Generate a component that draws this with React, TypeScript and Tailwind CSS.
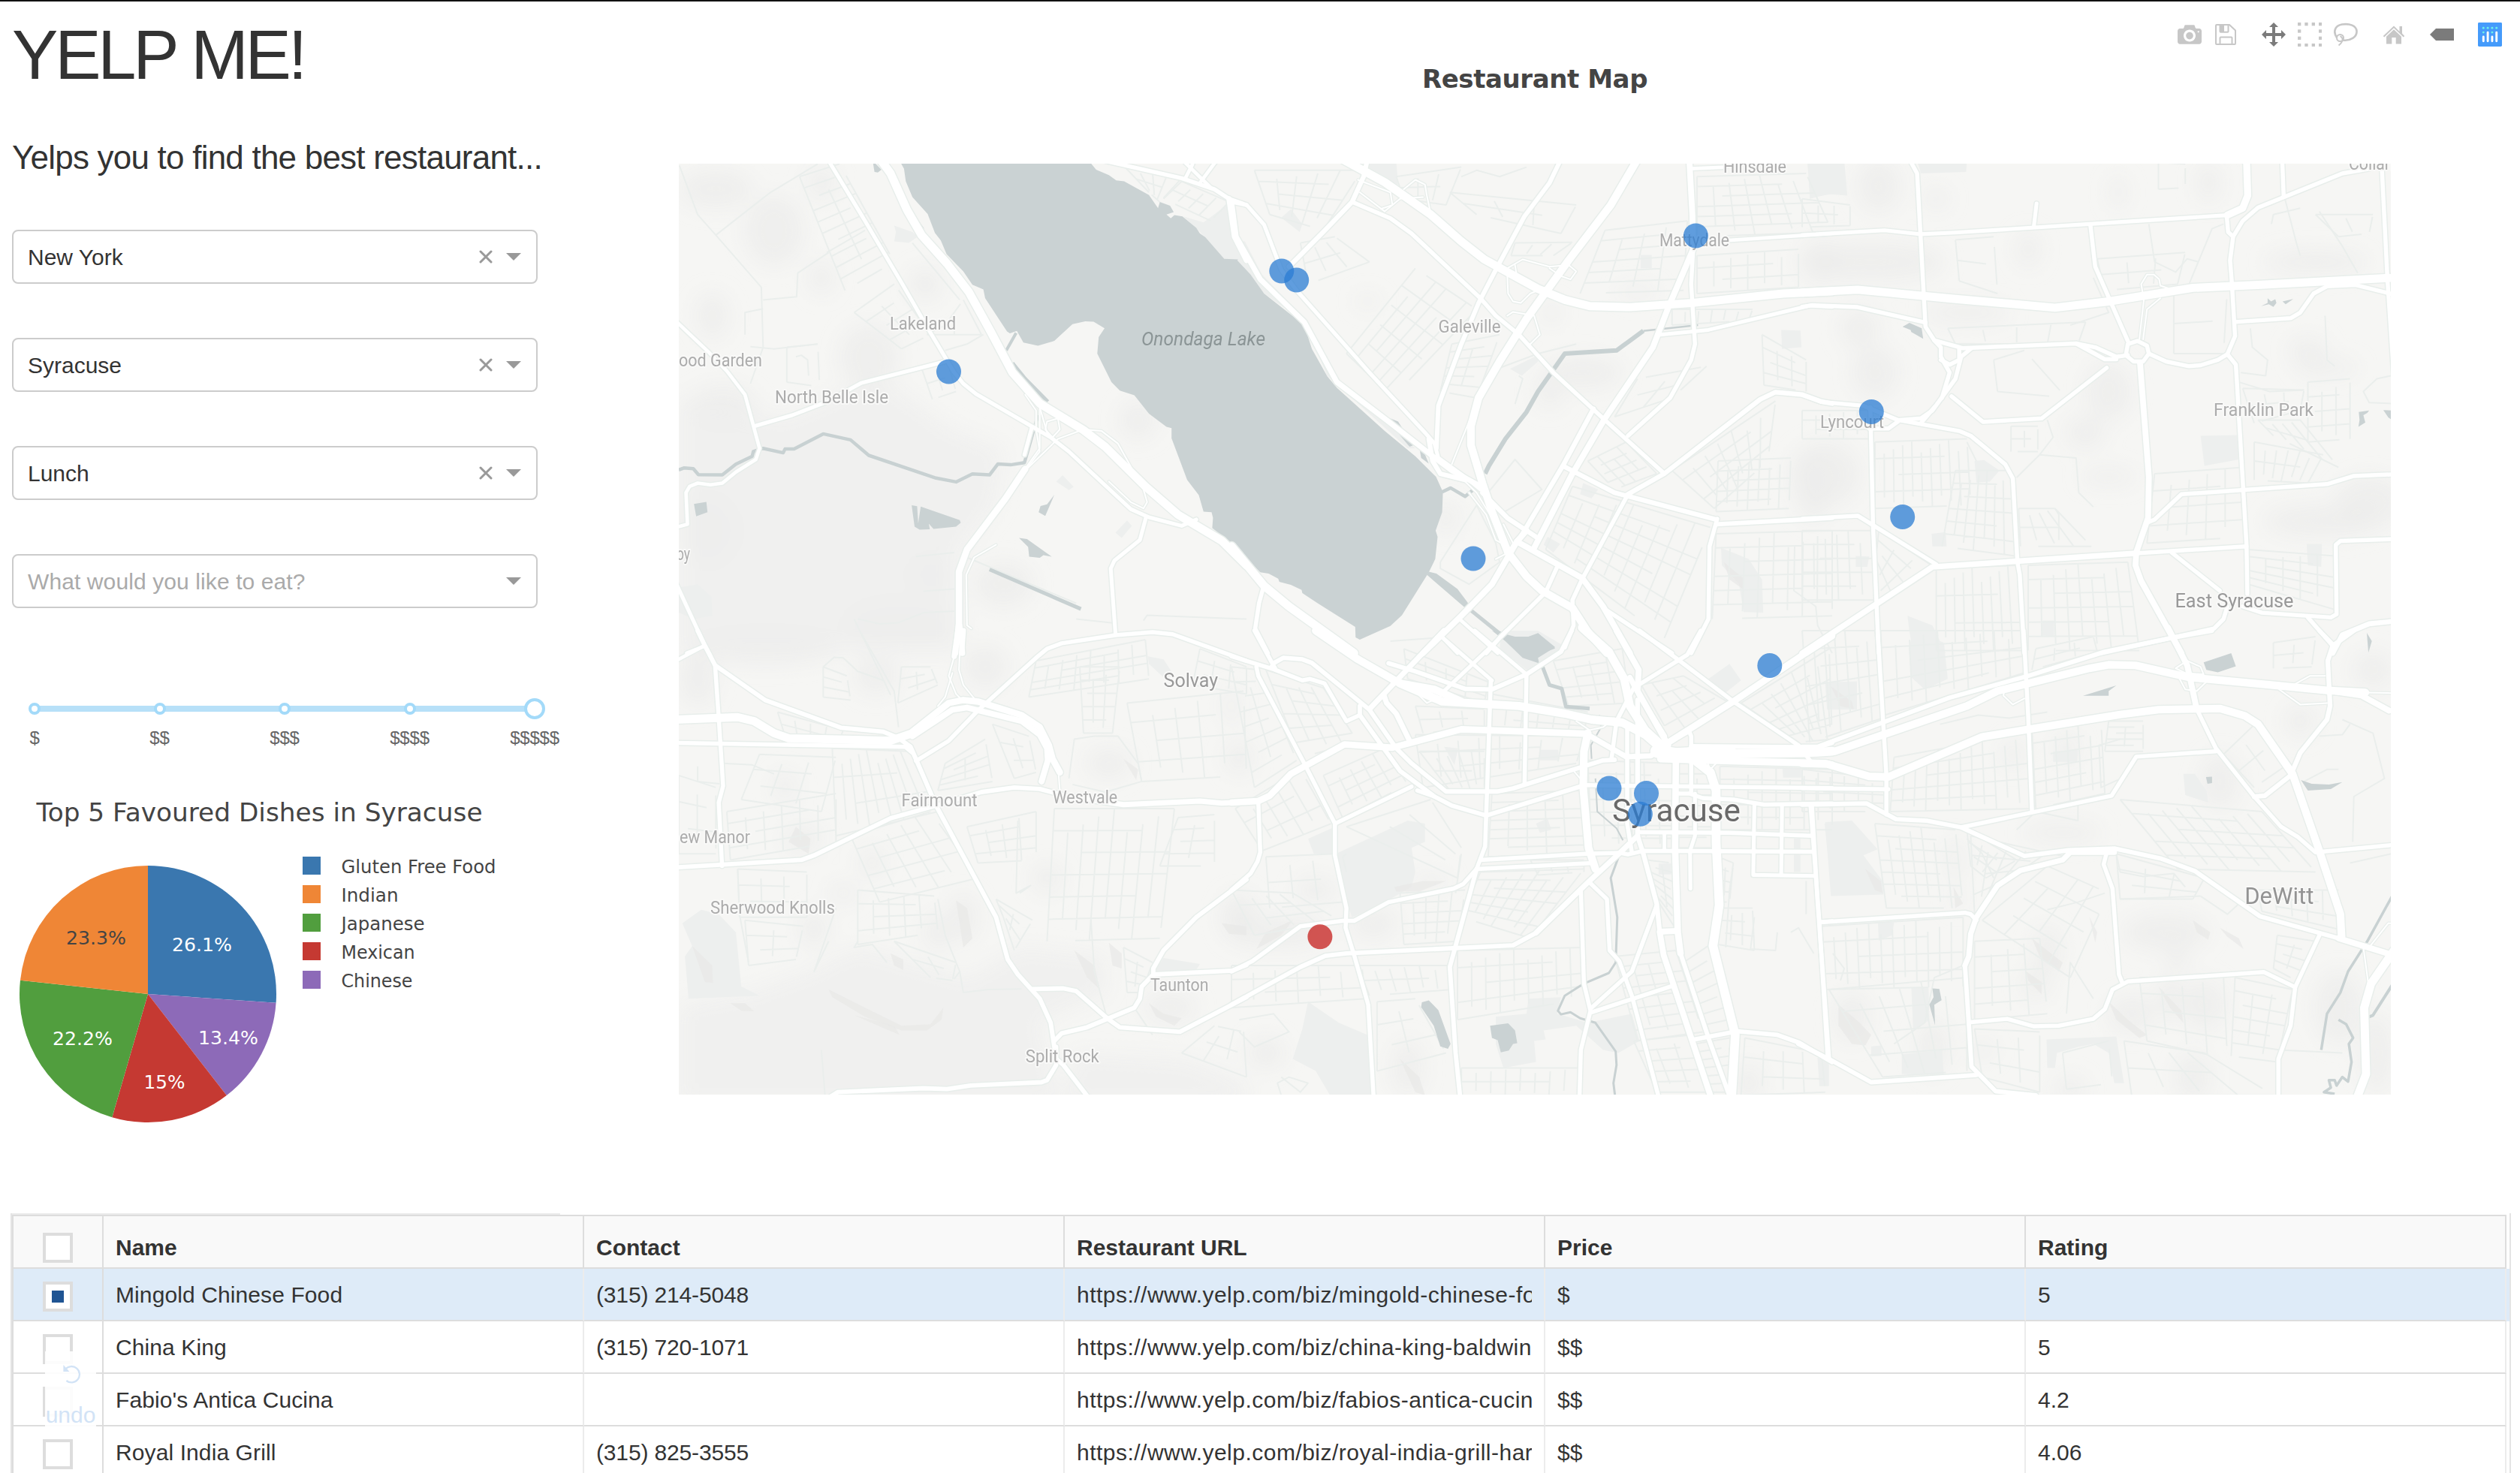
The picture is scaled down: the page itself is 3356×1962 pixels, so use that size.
import React from "react";

/* ------------------------------------------------------------------ */
/* Map geometry                                                        */
/* ------------------------------------------------------------------ */

type Tile = "A" | "B" | "C" | "D" | "E" | "F";

// Each survey tile has its own origin and resolution on the page.
const TILES: Record<Tile, [number, number, number, number]> = {
  A: [900, 210, 760 / 1568, 660 / 1568],
  B: [1640, 210, 800 / 1568, 660 / 1568],
  C: [2400, 210, 800 / 1568, 660 / 1568],
  D: [900, 840, 760 / 1568, 630 / 1568],
  E: [1640, 840, 800 / 1568, 630 / 1568],
  F: [2400, 840, 800 / 1568, 630 / 1568],
};

const pt = (t: Tile, x: number, y: number): [number, number] => {
  const [ox, oy, sx, sy] = TILES[t];
  return [Math.round((ox + x * sx) * 10) / 10, Math.round((oy + y * sy) * 10) / 10];
};

const line = (t: Tile, s: string) =>
  s
    .trim()
    .split(/\s+/)
    .map((p) => {
      const [x, y] = p.split(",").map(Number);
      return pt(t, x, y).join(",");
    })
    .join(" ");

const LAKE = [
  line("A", "615,10 627,35 632,75 650,125 692,178 712,238 728,262 744,305 790,360 815,402 845,417 850,445 910,550 918,556 937,548 955,585 995,595 1040,580 1090,527 1125,518 1148,519 1178,540 1162,568 1158,620 1197,710 1220,737 1260,752 1300,810 1348,852 1362,856 1362,888 1405,1020 1437,1068 1450,1120 1472,1122 1476,1140 1474,1172 1510,1205"),
  line("B", "0,1222 75,1312 97,1316 122,1332 125,1342 155,1352 183,1368 185,1378 225,1410 323,1485 324,1518 335,1525 415,1482 445,1448 515,1312 532,1270 538,1200 533,1180 550,1122 552,1058 534,1010 480,945 400,865 275,728 250,692 210,605 190,530 85,430 50,370 15,325"),
  line("A", "1545,322 1507,320 1455,252 1440,240 1430,222 1392,186 1370,182 1360,192 1348,180 1368,172 1358,152 1330,140 1325,160 1300,118 1232,75 1210,72 1190,55 1155,38 1135,10"),
].join(" ");

const WATER: [Tile, string][] = [
  ["A", "541,10 565,38 555,47 546,45"],
  ["A", "50,1096 84,1089 87,1122 56,1135"],
  ["A", "648,1100 663,1103 666,1157 673,1104 780,1147 783,1155 770,1168 708,1175 695,1158 698,1176 670,1177 656,1168"],
  ["A", "1040,1067 1015,1134 997,1122 1002,1102 1020,1097"],
  ["A", "943,1203 965,1207 1033,1263 1010,1258 1000,1266 971,1263 968,1232"],
  ["A", "643,158 683,225 670,215"],
  ["B", "515,1310 535,1316 590,1365 615,1405 625,1425 700,1498 735,1520 775,1522 800,1505 845,1553 810,1568 755,1568 620,1435 510,1320"],
  ["B", "405,820 435,835 475,910 465,915 430,865"],
  ["B", "492,928 500,925 515,968 495,950"],
  ["E", "680,0 740,20 775,20 800,8 845,55 800,90 803,108 760,90 715,35"],
  ["E", "497,1232 515,1226 540,1258 572,1370 565,1386 545,1378 528,1310 495,1248"],
  ["E", "675,1310 722,1302 740,1325 746,1368 735,1370 724,1392 703,1398 695,1358 680,1350"],
  ["C", "262,535 280,523 312,540 316,573 285,552 283,545"],
  ["C", "1198,470 1215,460 1215,445 1224,455 1235,448 1238,460 1230,472 1218,464"],
  ["C", "1254,455 1282,447 1262,464"],
  ["C", "1453,805 1480,800 1475,808 1465,815 1470,838 1452,852 1455,830"],
  ["C", "1517,799 1540,800 1540,830 1530,822"],
  ["C", "1474,1504 1487,1530 1478,1566"],
  ["F", "1048,105 1120,75 1132,118 1085,138 1055,130"],
  ["F", "733,216 820,182 800,200 800,216"],
  ["F", "1302,495 1330,508 1375,510 1410,502 1380,525 1320,530"],
  ["F", "1054,485 1070,484 1070,505 1058,508"],
  ["F", "340,1186 358,1188 364,1225 345,1240 347,1308 332,1240 343,1215"],
];

const STREAMS: [Tile, number, string][] = [
  ["A", 4.5, "8,988 22,982 48,984 62,1003 128,1004 165,970 210,945 213,930 240,920 295,934 300,922 325,922 405,874 480,893 530,942 715,1014 770,1026 815,1001 862,1004 885,969 920,972 958,965 995,815"],
  ["A", 4, "908,610 935,555"],
  ["A", 5, "925,650 960,700 1022,772"],
  ["A", 5, "862,1303 1113,1428"],
  ["B", 6, "662,1000 672,975 715,890 770,805 800,740 870,620 1005,610 1075,548"],
  ["B", 2.5, "1075,548 1218,530"],
  ["B", 4.5, "550,1058 572,1045 610,1072 632,1050"],
  ["E", 5, "812,120 830,180 862,192 873,252 935,258"],
  ["E", 2, "960,280 965,320 938,380 940,425"],
  ["E", 2, "950,490 955,600 1005,655 1022,695"],
  ["E", 3, "1012,745 990,820 1007,950 1003,1100 985,1135 920,1170 870,1210 852,1260 860,1272 885,1265 910,1285 950,1300 1003,1395 1005,1440 997,1500 1003,1560"],
  ["F", 3.5, "1540,880 1475,1030 1425,1130 1405,1200 1370,1270 1355,1390"],
  ["F", 4, "1540,1175 1490,1275 1470,1285"],
  ["F", 3.5, "1400,1290 1420,1305 1438,1350 1427,1370 1434,1430 1425,1495 1410,1480 1395,1508 1390,1490 1375,1490 1380,1515 1362,1530 1390,1536"],
];

const PARKS: [Tile, string][] = [
  ["A", "1450,205 1525,140 1540,250 1568,320 1568,350 1507,320 1440,235 1395,186"],
  ["A", "600,265 605,235 600,215 650,235 665,250 640,270"],
  ["A", "1063,1005 1093,1042 1080,1052 1045,1025"],
  ["A", "1240,1148 1253,1165 1225,1203 1208,1187"],
  ["A", "8,1360 60,1350 98,1390 100,1450 50,1460 8,1440"],
  ["B", "360,10 430,10 435,85 400,90 345,55"],
  ["B", "155,163 185,210 178,235 130,190"],
  ["B", "727,668 800,625 800,645 758,690"],
  ["B", "1503,10 1568,10 1568,115 1510,125"],
  ["B", "1068,308 1097,308 1097,350 1068,350"],
  ["B", "1435,545 1485,547 1488,600 1437,605"],
  ["B", "918,1030 957,1050 940,1078 910,1065"],
  ["B", "825,1200 858,1222 840,1250 815,1225"],
  ["B", "1278,1235 1350,1270 1385,1335 1388,1440 1337,1438 1325,1350 1280,1290"],
  ["B", "0,262 35,265 80,370 200,520 260,680 340,770 480,920 460,920 250,690 190,520 85,430 0,318"],
  ["C", "15,10 110,10 118,120 70,115 20,130"],
  ["C", "300,10 430,10 428,45 310,50"],
  ["C", "1040,880 1137,878 1140,955 1050,975"],
  ["C", "450,960 475,957 515,990 490,1025 455,1028"],
  ["C", "338,1190 375,1185 377,1230 340,1230"],
  ["C", "140,1260 175,1262 170,1295 140,1295"],
  ["C", "1317,1222 1357,1222 1355,1295 1320,1290"],
  ["C", "628,1465 658,1465 658,1515 625,1512"],
  ["C", "275,1450 340,1480 375,1568 290,1568 280,1500"],
  ["D", "18,970 70,925 118,940 165,1000 180,1180 230,1210 35,1220 25,1080 45,1045"],
  ["D", "1297,85 1340,95 1370,150 1340,155 1300,110"],
  ["D", "1340,1085 1440,1105 1430,1125 1312,1135"],
  ["E", "200,690 270,650 272,740 215,740"],
  ["E", "272,740 460,630 505,640 505,700 470,720 480,800 470,850 380,915 315,950 300,900"],
  ["E", "1245,160 1300,110 1330,165 1290,205"],
  ["E", "805,395 853,395 855,430 805,430"],
  ["E", "555,385 592,390 582,445"],
  ["E", "795,640 825,622 835,660 805,670"],
  ["E", "1115,772 1148,772 1148,808 1115,808"],
  ["E", "200,1230 280,1300 355,1340 365,1568 270,1568 220,1460 160,1420 185,1320"],
  ["E", "690,1280 770,1270 775,1220 860,1215 850,1270 930,1300 1045,1270 1065,1360 1010,1400 970,1390 900,1310 815,1325 820,1355 790,1360 795,1430 710,1450 690,1370"],
  ["E", "1438,455 1487,455 1487,487 1440,487"],
  ["E", "1548,640 1568,640 1568,880"],
  ["E", "1468,690 1485,690 1485,800 1468,800"],
  ["E", "705,0 800,0 880,60 780,140 700,60"],
  ["F", "60,635 130,630 197,725 160,745 210,830 212,875 75,880"],
  ["F", "60,172 143,168 143,262 65,262"],
  ["F", "290,0 370,40 380,160 320,195 285,155 278,60"],
  ["F", "655,400 720,395 718,435 655,435"],
  ["F", "995,475 1025,475 1055,530 1060,570 1000,545"],
  ["F", "198,968 240,968 235,1010 200,1028"],
  ["F", "285,1185 330,1185 332,1290 290,1330"],
  ["F", "638,1355 820,1345 840,1500 815,1500 800,1400 760,1370 720,1380 665,1400 660,1450 640,1450"],
  ["F", "260,1405 365,1390 370,1475 260,1470"],
  ["F", "180,1378 207,1375 207,1410 180,1412"],
  ["F", "40,1415 70,1430 70,1510 45,1510"],
];

const SHADE_AREAS: [Tile, string][] = [
  ["A", "8,760 300,820 560,690 760,860 900,920 880,1100 780,1250 780,1568 8,1568"],
  ["D", "380,1120 500,1050 800,1150 950,1050 1180,1080 1180,1200 1000,1300 1060,1568 8,1568 8,1240 200,1200"],
  ["D", "1100,1400 1400,1420 1568,1500 1568,1568 1060,1568"],
];

// Hill shading: tile, centre x/y, radius x/y
const SHADES: [Tile, number, number, number, number][] = [
  ["A", 270, 230, 80, 110], ["A", 400, 80, 40, 50], ["A", 100, 500, 45, 70], ["A", 400, 380, 35, 50], ["A", 685, 400, 45, 50],
  ["A", 530, 630, 80, 100], ["A", 110, 100, 100, 60], ["A", 700, 1320, 50, 50], ["A", 900, 1350, 80, 70], ["A", 620, 1480, 150, 70],
  ["A", 1270, 830, 50, 60], ["A", 130, 780, 90, 60], ["A", 90, 1180, 70, 100],
  ["B", 835, 490, 22, 36], ["B", 1060, 425, 50, 20], ["B", 1540, 330, 50, 70], ["B", 920, 680, 100, 50], ["B", 830, 740, 35, 55],
  ["B", 355, 455, 30, 20], ["B", 560, 1140, 30, 50], ["B", 1520, 1040, 50, 110],
  ["C", 200, 90, 55, 80], ["C", 180, 330, 190, 60], ["C", 430, 490, 110, 30], ["C", 150, 540, 50, 60], ["C", 190, 680, 60, 80],
  ["C", 590, 290, 30, 55], ["C", 800, 740, 60, 90], ["C", 740, 870, 50, 50], ["C", 1340, 330, 130, 36], ["C", 1320, 610, 50, 40],
  ["C", 1370, 665, 80, 25], ["C", 1360, 1150, 150, 50], ["C", 1480, 1090, 90, 80], ["C", 60, 1000, 90, 100], ["C", 825, 110, 20, 50],
  ["C", 1060, 80, 30, 60], ["C", 350, 130, 30, 30], ["C", 800, 1010, 70, 25],
  ["D", 350, 690, 50, 45], ["D", 540, 770, 35, 45], ["D", 1190, 440, 60, 50], ["D", 1020, 820, 40, 50], ["D", 790, 950, 40, 80],
  ["D", 720, 1000, 40, 60], ["D", 1360, 1250, 70, 50], ["D", 1550, 950, 50, 80], ["D", 60, 160, 50, 90], ["D", 250, 60, 200, 50],
  ["D", 300, 520, 30, 50], ["D", 460, 870, 40, 30], ["D", 380, 990, 40, 60], ["D", 850, 120, 60, 70], ["D", 550, 150, 60, 60],
  ["E", 20, 420, 35, 55], ["E", 220, 860, 50, 40], ["E", 120, 1000, 130, 50], ["E", 370, 970, 60, 50], ["E", 460, 1450, 40, 90],
  ["E", 90, 1400, 50, 50], ["E", 520, 830, 50, 18], ["E", 0, 250, 20, 60], ["E", 1350, 1500, 35, 60], ["E", 10, 960, 30, 60],
  ["F", 690, 390, 30, 45], ["F", 550, 410, 28, 45], ["F", 680, 670, 100, 30], ["F", 1090, 500, 50, 90], ["F", 950, 1000, 110, 60],
  ["F", 980, 1090, 25, 50], ["F", 640, 1060, 35, 80], ["F", 130, 1280, 45, 80], ["F", 610, 1170, 35, 50], ["F", 860, 1270, 60, 60],
  ["F", 960, 1220, 35, 70], ["F", 1050, 1240, 55, 80], ["F", 1020, 1480, 45, 80], ["F", 340, 1380, 40, 90], ["F", 470, 1390, 30, 30],
  ["F", 1300, 300, 40, 50], ["F", 1490, 130, 50, 60], ["F", 1400, 1250, 60, 120], ["F", 400, 760, 20, 70], ["F", 405, 890, 15, 35],
  ["F", 1500, 1400, 40, 130], ["F", 700, 1520, 40, 40],
];

// Small dark flanks inside the hill shading
const FLANKS: [Tile, string][] = [
  ["D", "420,1190 620,1310 700,1305 735,1250 730,1290 690,1325 620,1325 520,1280 430,1215"],
  ["D", "490,1275 600,1310 615,1340"], ["D", "770,895 800,920 815,1020 790,1050"], ["D", "1095,1060 1150,1110 1165,1190 1130,1150"],
  ["D", "330,650 370,690 365,740 310,700"], ["D", "1190,1035 1225,1070 1225,1120 1200,1110"], ["D", "1230,425 1270,460 1265,495"],
  ["D", "150,1235 190,1235 215,1262 180,1260"], ["D", "590,1070 625,1090 625,1125 600,1110"], ["D", "45,1045 100,1110 102,1168 80,1165"],
  ["D", "1500,970 1568,980 1568,1010 1520,1005"], ["D", "1300,1235 1340,1270 1390,1285 1370,1310 1320,1280"],
  ["F", "95,1240 150,1300 180,1340 165,1375 130,1370 95,1310"], ["F", "600,1020 640,1060 680,1100 670,1130 620,1080"],
  ["F", "750,950 770,1000 765,1035"], ["F", "1020,960 1065,1000 1060,1025 1030,1000"], ["F", "1090,985 1140,1020 1152,1055 1110,1015"],
  ["F", "585,1130 625,1165 625,1205 590,1160"], ["F", "800,1230 850,1290 900,1340 880,1350 820,1290"], ["F", "930,1180 990,1260 995,1300 960,1250"],
  ["F", "395,850 420,905 400,920"], ["F", "165,790 205,830 210,870 190,860"], ["F", "75,185 130,235 135,260 100,250"],
  ["E", "425,850 500,830 560,830 490,865 430,865"], ["E", "90,1000 160,960 130,1010 65,1055"], ["E", "440,1420 490,1480 505,1540 480,1530"],
  ["B", "1285,1280 1335,1330 1335,1365 1300,1335"],
];

const ROADS: [Tile, number, string][] = [
  // north west
  ["A", 14, "565,10 590,50 635,165 675,245 745,335 805,425 865,550 925,680 1000,778 1120,862 1180,915 1290,1040 1380,1130 1500,1212 1568,1290"],
  ["A", 6.5, "420,10 520,200 620,395 690,535 765,680 790,715 825,748 1030,885 1080,930 1250,1112 1300,1138 1390,1165 1430,1145"],
  ["A", 6, "0,517 90,615 140,675 190,750 230,920 220,955 165,995 128,1030 95,1035 60,1030 38,1040 28,1060 32,1160 0,1170"],
  ["A", 6.5, "215,850 320,815 410,775 510,713 740,645"],
  ["A", 6.5, "978,855 958,940"],
  ["A", 11, "960,985 905,1080 800,1240 778,1310 778,1500"],
  ["A", 9, "776,1480 769,1568"],
  ["A", 9, "780,1480 788,1568"],
  ["A", 6.5, "1292,1138 1275,1210 1205,1275 1195,1300 1208,1505"],
  ["A", 6.5, "0,1345 80,1545 95,1575"],
  ["A", 6, "30,1568 80,1545"],
  ["A", 7, "1160,5 1390,65 1480,100 1520,130 1568,150"],
  ["A", 9, "1520,130 1535,250 1568,325"],
  ["A", 6, "1390,5 1470,95"],
  ["A", 6, "1485,10 1440,80"],
  ["A", 6, "1420,20 1400,65"],
  // north centre
  ["B", 14, "290,5 400,78 520,180 600,265 660,322 800,415 870,450 935,470 1040,473 1200,460 1440,430 1568,423"],
  ["B", 13, "1060,5 990,150 880,325 770,510 700,645 645,760 625,850 625,910 655,1030 680,1120 722,1250 770,1325 810,1370 890,1425 930,1500 980,1568"],
  ["B", 10, "500,1568 600,1450 680,1350 745,1215 770,1180"],
  ["B", 9, "0,140 12,250 75,385 190,520 275,710 410,835 515,935 575,990 650,1040"],
  ["B", 6.5, "0,140 40,150 85,212 130,355 170,420 360,680 505,870 530,905 540,950 620,1020 650,1050"],
  ["B", 8, "355,5 345,60 315,140 240,235 150,345"],
  ["B", 7, "315,140 415,192 470,240 650,445 690,500 750,560 840,680 970,825 1130,1000"],
  ["B", 7.5, "860,5 830,80 765,185 690,355 645,460 600,590 540,785 535,920"],
  ["B", 10, "1195,5 1203,180 1205,290 1140,475 1100,600 975,825 890,1000 790,1235"],
  ["B", 7, "1205,290 1200,400 1210,590 1200,640 1145,760 1035,880"],
  ["B", 6, "1200,35 1290,30"],
  ["B", 6, "1215,268 1568,240"],
  ["B", 6.5, "1120,560 1245,545 1510,468 1568,472"],
  ["B", 8, "945,795 865,975 750,1210"],
  ["B", 8, "865,975 1000,1060 1265,1145"],
  ["B", 7.5, "1265,1160 1568,1140"],
  ["B", 7, "1268,1143 1248,1230 1245,1460 1200,1568"],
  ["B", 8, "1035,1065 1130,1000 1380,765 1420,742 1490,750 1540,772 1568,778"],
  ["B", 7, "1035,1065 915,1335 890,1400 893,1480 870,1550"],
  ["B", 10, "745,1215 915,1330 970,1420 1040,1568"],
  ["B", 7, "970,1425 1150,1568"],
  ["B", 8, "655,1060 720,1140 795,1200"],
  ["B", 7, "850,1295 820,1375 700,1520 665,1568"],
  ["B", 14, "0,1230 85,1355 150,1420 320,1568"],
  ["B", 7, "82,1365 72,1410 62,1490 95,1568"],
  ["B", 6, "595,1460 695,1568"],
  ["B", 6, "548,1515 590,1568"],
  ["B", 10, "1500,1568 1568,1515"],
  ["B", 8, "515,890 525,960 545,1000 610,1020"],
  // north east
  ["C", 14, "0,427 145,418 400,447 660,475 800,455 1020,412 1200,402 1545,380"],
  ["C", 6.5, "0,245 215,230 310,242 400,237 750,210 1110,182"],
  ["C", 12, "1160,5 1163,120 1150,160 1110,182"],
  ["C", 7, "280,5 300,50 322,535 345,578 420,603 715,588 765,600 820,630 850,625"],
  ["C", 7, "345,578 362,600 362,630 385,680 380,700 365,760"],
  ["C", 7, "440,605 415,630 400,700 340,800 310,825 255,830"],
  ["C", 7, "410,605 410,640 385,655 362,640"],
  ["C", 7, "715,588 790,638 820,638"],
  ["C", 7, "345,790 310,840"],
  ["C", 7, "752,210 765,345 850,580"],
  ["C", 6.5, "612,145 605,215"],
  ["C", 7, "850,590 875,580 900,595 905,620 890,645 865,645 845,625 850,590"],
  ["C", 10, "882,650 905,1010 903,1140 872,1250 870,1290 885,1340 990,1568"],
  ["C", 7, "905,620 950,645 1010,660 1040,657 1085,640 1110,622 1130,565 1122,400 1117,325 1125,250 1112,235 1108,182"],
  ["C", 7, "1125,250 1150,200 1190,158 1410,50 1480,35"],
  ["C", 7, "1253,5 1257,125"],
  ["C", 7, "1512,5 1528,390 1545,700"],
  ["C", 7, "1130,520 1275,508 1300,490 1335,430 1370,407 1445,403 1545,433"],
  ["C", 7, "1110,622 1132,655 1160,1225 1162,1380"],
  ["C", 7, "0,472 25,467 145,473 322,522"],
  ["C", 7, "0,750 50,773 160,785 250,830 410,865 440,880 530,970 550,1015 562,1280 568,1320 580,1568"],
  ["C", 7, "178,790 185,1165 200,1568"],
  ["C", 7, "175,857 225,857 250,835"],
  ["C", 7, "390,755 472,836 625,825 795,665"],
  ["C", 7, "0,1143 145,1133 350,1287"],
  ["C", 9.5, "0,1568 340,1295 870,1252"],
  ["C", 7, "870,1252 1160,1230"],
  ["C", 7, "965,1250 1090,1370"],
  ["C", 7, "1110,1420 1100,1460 1075,1490 970,1518 780,1568"],
  ["C", 7, "905,1153 920,1145 990,1065 1370,1033 1440,1007 1545,1002"],
  ["C", 7, "1150,1420 1200,1440 1380,1455 1395,1445 1393,1225 1405,1213 1545,1207"],
  ["C", 7, "1320,1455 1385,1545"],
  ["C", 8.5, "1385,1568 1410,1510 1480,1475 1545,1467"],
  // south west
  ["D", 7.5, "60,0 78,45 108,115 245,230 455,322 570,335 610,355 645,385 665,440 715,580 880,950 912,1090 940,1140 1000,1220 1030,1300 1045,1420 1065,1440 1135,1550"],
  ["D", 6, "0,100 78,50"],
  ["D", 7, "108,115 118,290 130,515 118,570 127,780"],
  ["D", 14, "0,295 170,287 215,300 270,340 310,357 590,365 650,340"],
  ["D", 11, "650,335 750,240 790,230 830,235 950,280 1000,320 1025,380 1035,425 1055,470"],
  ["D", 10, "650,350 700,310 760,262 800,255 950,300 1000,345 1020,390 1022,430 1005,500"],
  ["D", 7, "0,372 630,385 650,405"],
  ["D", 7, "660,432 750,365 830,265 990,90 1020,60 1060,42 1208,15 1310,5 1365,12 1568,100"],
  ["D", 9, "775,0 765,85"],
  ["D", 9, "790,0 785,75"],
  ["D", 7.5, "0,785 345,760 380,745 590,622 715,580 840,535 930,520 1000,525 1080,550"],
  ["D", 9, "1080,550 1230,577 1440,565 1500,572 1568,568"],
  ["D", 7.5, "1568,825 1430,950 1340,1060 1312,1120 1312,1140 1280,1180 1275,1220 1260,1250 1130,1315 1060,1335 1040,1360"],
  ["D", 7.5, "980,1188 1065,1186 1100,1195 1185,1285 1220,1315 1385,1330 1568,1215"],
  ["D", 7.5, "1312,1140 1530,1127 1568,1108"],
  ["D", 7.5, "1045,1380 1045,1440 1020,1490 1005,1497 810,1508 745,1520 680,1517 445,1530 425,1545"],
  // south centre
  ["E", 13, "220,0 330,95 440,175 530,195 600,235"],
  ["E", 14, "440,175 550,235 750,250 870,275 940,295 1020,305 1080,345 1130,400"],
  ["E", 14, "915,-10 985,70 1025,160 1040,250 1080,330 1140,400"],
  ["E", 7, "0,85 110,128 185,165 205,160 243,175 300,300 335,280"],
  ["E", 7, "60,0 115,128"],
  ["E", 7.5, "105,120 110,108 135,90 185,95 210,107 360,262 430,390 470,440 560,533 695,533 735,523 970,430 1000,428"],
  ["E", 7, "65,120 70,150 190,440 270,640 270,745 300,920 298,985 320,1075 357,1240 372,1568"],
  ["E", 7.5, "335,250 335,280 440,465 530,550 575,580 665,613 915,515"],
  ["E", 11, "0,570 70,565 100,547 155,475 295,377 420,388 600,327 930,342"],
  ["E", 9, "555,0 435,160 360,260"],
  ["E", 9, "398,215 405,240 430,275 465,365"],
  ["E", 6.5, "548,20 680,165"],
  ["E", 6.5, "718,0 680,50 555,200"],
  ["E", 6.5, "635,0 770,145"],
  ["E", 7.5, "410,108 480,135 610,193 680,195 770,145 860,70 888,0"],
  ["E", 7, "677,165 662,715 640,790 605,840 580,855 410,900 320,962 290,962 180,980 55,1095 0,1130"],
  ["E", 7, "770,145 765,510"],
  ["E", 7, "70,565 75,735 68,765 50,805 0,860"],
  ["E", 7, "270,640 470,517"],
  ["E", 7, "485,530 530,550"],
  ["E", 7.5, "0,1240 180,1115 245,1078 300,1070 735,1043 795,1002"],
  ["E", 9, "795,1002 930,835 1015,735 1060,680"],
  ["E", 7.5, "640,790 570,1115 585,1400 598,1560"],
  ["E", 13, "930,340 920,400 918,520 932,720 950,790"],
  ["E", 9, "930,345 1030,418 1095,415 1140,370 1190,335"],
  ["E", 10, "1005,0 1063,130 1060,200 1140,380"],
  ["E", 9, "1040,155 1065,215 1130,350"],
  ["E", 11, "1135,375 1310,235 1568,15"],
  ["E", 7, "1065,0 1170,100 1310,235 1480,380 1510,430"],
  ["E", 7, "1225,0 1190,80 1050,190 1005,300 992,425"],
  ["E", 22, "1110,400 1160,410 1300,400"],
  ["E", 15, "1160,410 1500,405 1568,400"],
  ["E", 12, "1120,425 1250,430 1550,440 1568,445"],
  ["E", 7.5, "1200,383 1530,387 1568,372"],
  ["E", 7, "1195,335 1200,350 1200,535"],
  ["E", 15, "1215,435 1250,470 1265,530 1265,700 1273,910 1257,1045 1315,1340 1305,1560"],
  ["E", 11, "1160,430 1158,720 1165,1000 1172,1070"],
  ["E", 7.5, "1172,1070 1245,1350 1305,1560"],
  ["E", 7, "1033,310 1033,640 1045,735"],
  ["E", 8, "1060,230 1060,680 1075,740 1110,905 1118,1000"],
  ["E", 10, "1118,1000 1128,1075 1255,1560"],
  ["E", 10, "1118,998 1165,995"],
  ["E", 7, "920,512 1100,515 1568,522"],
  ["E", 7, "1160,540 1195,540 1230,555 1310,560 1390,577 1568,573"],
  ["E", 7, "1060,668 1300,670 1515,680"],
  ["E", 7, "650,760 925,740 1015,737 1035,742 1075,730 1520,733"],
  ["E", 7, "640,790 945,770"],
  ["E", 6.5, "1365,575 1362,810 1525,813"],
  ["E", 6.5, "1437,580 1435,810"],
  ["E", 7, "1515,580 1530,900 1560,1420"],
  ["E", 6, "1130,675 1130,730"],
  ["E", 6.5, "1210,540 1210,680 1197,730 1198,855"],
  ["E", 7, "1535,967 1568,963"],
  ["E", 7, "935,835 980,890 987,1060 1012,1095 1045,1210 1118,1560"],
  ["E", 7, "912,860 920,1170 937,1260 912,1390 908,1560"],
  ["E", 7, "1110,910 1045,1130 940,1250"],
  ["E", 7, "940,1265 1150,1178"],
  ["E", 7.5, "1210,1355 1320,1328 1425,1340 1480,1365 1568,1430"],
  // south east
  ["F", 7.5, "0,385 40,385 385,222 590,150 790,70 960,25 1070,0"],
  ["F", 13, "0,405 85,400 430,250 510,200 750,125 800,113 870,115 1010,155 1240,182 1370,198 1470,205"],
  ["F", 10, "1370,198 1460,215 1532,265"],
  ["F", 13, "0,440 65,442 175,483 225,485 470,352 830,278 930,262 1090,258 1155,282 1190,310 1280,475 1350,730 1405,940 1408,1015"],
  ["F", 7, "197,0 220,480 220,610"],
  ["F", 7, "0,522 225,526"],
  ["F", 7.5, "0,577 168,573 245,625 325,630 415,652 580,747 695,728 815,722 935,755 1025,797 1195,947 1400,1020"],
  ["F", 10, "1400,1020 1545,1077"],
  ["F", 7, "415,652 808,547 872,418 1080,400"],
  ["F", 7, "578,0 590,280 600,600"],
  ["F", 10, "955,-10 1005,115 1030,260"],
  ["F", 7, "1030,260 1080,390 1180,550 1250,650 1295,685 1340,735 1545,710"],
  ["F", 8, "1180,550 1208,547 1275,480 1300,405 1370,295 1378,250 1372,100 1385,50 1440,0"],
  ["F", 7, "1350,0 1385,45"],
  ["F", 9, "815,735 700,735 680,760 570,795 510,845 455,950 440,1005 435,1080 425,1110"],
  ["F", 7.5, "425,1110 435,1300 442,1445 505,1527 610,1540"],
  ["F", 7, "45,967 425,935 440,940 455,960"],
  ["F", 7, "795,735 787,775 810,855 827,1140 835,1165"],
  ["F", 7, "440,1298 535,1287 605,1312 670,1310 760,1287 790,1255 810,1190 850,1163 1205,1132 1287,1182"],
  ["F", 7, "1350,1010 1287,1182 1275,1310 1243,1420 1243,1560"],
  ["F", 7, "22,580 45,970 67,1420"],
  ["F", 7.5, "-10,1370 70,1420 180,1497 455,1473"],
  ["F", 14, "1545,1060 1485,1170 1467,1250 1472,1470 1445,1560"],
];

// Slip roads and interchange loops
const RAMPS: [Tile, string][] = [
  ["A", "960,750 990,800 990,860 1000,930 960,990 920,1060"],
  ["A", "1000,790 1000,920 950,1000"],
  ["A", "1000,790 1020,870 1040,890"],
  ["A", "960,990 1050,890 1120,860 1170,865 1215,905 1285,1050 1295,1090 1285,1110 1250,1090 1190,1025"],
  ["A", "1020,835 1050,825 1055,860 1035,885 1015,860 1020,835"],
  ["A", "880,1225 820,1265 798,1320 800,1480 812,1490"],
  ["B", "720,350 760,322 830,345 880,340 900,360 885,385 860,375 830,350"],
  ["B", "740,340 745,375 800,405"],
  ["B", "720,370 722,430 735,455 755,460 780,430 820,410"],
  ["B", "720,500 735,488 790,500 805,560 780,590"],
  ["B", "450,100 480,70 505,85 510,120 518,165"],
  ["B", "335,110 400,170 440,130 500,125"],
  ["B", "330,70 415,110 420,150 390,162"],
  ["B", "620,1060 665,1130 690,1210 720,1230"],
  ["B", "580,990 640,1060 700,1180"],
  ["B", "575,970 605,880 625,820"],
  ["B", "690,1270 722,1250 735,1220 710,1160"],
  ["C", "880,575 892,450 885,400 900,370 918,370 932,385 935,405 960,415"],
  ["C", "890,575 900,480 935,445"],
  ["D", "765,85 750,150 770,210 780,222"],
  ["D", "780,75 778,130 790,180 820,225"],
  ["D", "760,140 740,220 720,250"],
  ["D", "1052,480 1055,530"],
  ["E", "900,300 935,330 970,320 1000,290 940,290"],
  ["E", "890,460 910,490 920,470"],
  ["E", "470,190 510,240 560,210"],
  ["E", "1240,430 1250,460 1280,420"],
  ["F", "975,125 1005,100 1040,120 1048,145 1000,140 975,125"],
  ["F", "985,160 1000,195 1030,200 1055,170 1020,165"],
  ["F", "530,190 525,215 550,245 580,225"],
  ["F", "1245,195 1300,245 1370,240"],
  ["F", "1275,185 1325,150 1365,150"],
  ["F", "1470,205 1540,207"],
  ["F", "1480,1050 1530,970 1545,970"],
  ["F", "1465,1050 1480,1190"],
];

// Street blocks: tile, four corners, lines across, lines down
const BLOCKS: [Tile, string, number, number][] = [
  ["A", "340,60 450,20 600,330 465,420", 2, 10], ["A", "490,490 600,400 700,560 620,605", 2, 4],
  ["A", "690,560 740,530 790,450 840,560", 1, 2], ["A", "1230,25 1390,65 1330,140 1300,110", 4, 2],
  ["A", "1390,75 1520,140 1470,200 1340,130", 4, 2], ["A", "675,665 745,640 770,740 705,765", 2, 2], ["A", "305,600 390,590 395,725 305,710", 1, 1],
  ["B", "300,620 480,350 640,480 420,760", 5, 6], ["B", "575,590 700,560 640,760 545,740", 2, 6], ["B", "60,40 340,40 240,230 100,180", 5, 4],
  ["B", "1215,60 1500,50 1568,235 1215,250", 7, 6], ["B", "975,230 1190,200 1180,420 910,430", 4, 6], ["B", "1215,310 1480,290 1480,410 1215,430", 6, 3],
  ["B", "1150,990 1420,770 1400,960 1260,1110", 7, 4], ["B", "890,1040 1250,1170 1130,1520 820,1240", 9, 7], ["B", "1265,1190 1568,1180 1568,1450 1255,1460", 8, 6],
  ["B", "1270,960 1460,950 1455,1110 1265,1120", 7, 5], ["B", "1385,560 1500,640 1500,740 1390,720", 3, 4], ["B", "430,60 600,30 560,150 450,130", 3, 2],
  ["B", "570,110 900,150 860,240 640,180", 3, 2], ["B", "1030,900 1110,1000 1000,1050 930,960", 4, 4], ["B", "1000,820 1060,700 1240,660 1150,760", 2, 2],
  ["B", "1150,480 1360,480 1350,515 1150,530", 6, 1], ["B", "180,270 270,250 360,330 200,400", 3, 2], ["B", "740,270 890,268 840,310 730,310", 3, 1],
  ["C", "0,130 125,150 125,215 0,220", 3, 2], ["C", "190,900 430,890 440,1100 190,1110", 10, 4], ["C", "400,990 545,990 555,1260 365,1230", 7, 6],
  ["C", "0,1180 180,1180 190,1400 0,1400", 6, 5], ["C", "350,1300 560,1290 575,1560 350,1560", 9, 3], ["C", "590,1290 850,1280 880,1560 590,1560", 8, 6],
  ["C", "200,1180 350,1300 200,1420 190,1300", 3, 4], ["C", "565,1110 660,1110 755,1230 570,1230", 4, 2], ["C", "920,1000 1150,980 1155,1200 900,1220", 5, 4],
  ["C", "1165,1240 1390,1260 1390,1430 1165,1350", 5, 5], ["C", "1320,710 1430,700 1430,890 1320,900", 3, 4], ["C", "1180,900 1360,940 1320,1030 1180,1020", 6, 2],
  ["C", "0,800 180,800 180,890 0,890", 5, 3], ["C", "400,260 500,250 510,430 410,390", 1, 2], ["C", "770,320 1000,300 980,400 790,420", 3, 2],
  ["C", "380,540 740,520 720,590 400,590", 4, 1], ["C", "545,850 615,850 615,930 545,930", 2, 2], ["C", "930,15 1000,20 1000,95 930,100", 1, 1],
  ["C", "1340,180 1490,180 1480,240 1400,250", 2, 1], ["C", "970,430 1110,410 1100,620 970,620", 1, 2], ["C", "1150,730 1310,735 1300,800 1180,840", 3, 2],
  ["C", "500,640 580,610 690,760 510,740", 1, 1], ["C", "1190,830 1300,830 1400,980 1230,880", 4, 2],
  ["D", "990,100 1290,30 1300,160 970,220", 8, 5], ["D", "430,390 640,400 720,600 440,680", 9, 3], ["D", "140,600 440,540 440,700 150,760", 6, 4],
  ["D", "230,410 440,420 400,600 180,560", 3, 3], ["D", "1040,590 1370,590 1330,1020 1020,1030", 8, 6], ["D", "1380,620 1480,610 1480,780 1330,780", 2, 4],
  ["D", "480,680 700,600 830,820 560,900", 5, 5], ["D", "500,860 710,880 720,1000 500,1040", 5, 4], ["D", "190,960 350,980 330,1090 200,1110", 2, 3],
  ["D", "740,440 850,360 870,500 720,530", 2, 5], ["D", "800,650 990,600 990,760 830,770", 4, 4], ["D", "1110,120 1220,120 1200,340 1120,340", 3, 5],
  ["D", "1240,240 1560,200 1568,480 1280,500", 5, 4], ["D", "280,270 460,330 440,390 300,350", 4, 2], ["D", "8,480 110,520 110,740 8,740", 2, 3],
  ["D", "170,790 360,800 360,950 175,950", 3, 3], ["D", "620,120 700,120 720,180 610,240", 2, 3], ["D", "405,120 470,150 480,230 405,220", 1, 3],
  ["D", "600,1030 770,1100 760,1160 700,1150", 2, 2], ["D", "880,890 980,960 930,1060 900,950", 2, 3], ["D", "1440,60 1568,120 1568,210 1420,180", 3, 3],
  ["D", "870,310 970,350 990,470 930,490", 2, 3], ["D", "1390,1400 1480,1310 1560,1330 1568,1480", 2, 3], ["D", "1230,1050 1310,1100 1280,1200 1240,1200", 2, 4],
  ["E", "240,480 400,390 460,510 290,620", 5, 4], ["E", "480,345 920,350 900,440 500,520", 8, 3], ["E", "490,400 660,400 660,530 570,530", 5, 2],
  ["E", "680,540 910,530 925,740 670,750", 5, 7], ["E", "650,800 920,790 780,1020 600,950", 7, 6], ["E", "90,130 240,190 330,370 180,420", 4, 6],
  ["E", "0,120 70,130 170,430 60,520", 2, 8], ["E", "590,1060 920,1050 925,1220 590,1290", 9, 4], ["E", "330,1110 570,1110 575,1190 360,1210", 6, 2],
  ["E", "600,1450 910,1450 905,1540 600,1540", 8, 2], ["E", "930,430 1150,440 1155,730 940,730", 6, 7], ["E", "1165,440 1265,440 1265,720 1165,720", 2, 8],
  ["E", "1275,450 1568,460 1568,660 1275,660", 8, 5], ["E", "1080,740 1160,740 1165,1000 1115,900", 2, 8], ["E", "1270,750 1310,770 1300,900 1270,900", 2, 4],
  ["E", "1280,920 1360,920 1365,1060 1270,1040", 3, 3], ["E", "1330,240 1560,60 1568,360 1480,370", 7, 6], ["E", "1000,1080 1160,1060 1230,1330 1060,1360", 4, 8],
  ["E", "440,870 610,860 590,1030 450,1040", 5, 5], ["E", "450,60 670,170 660,240 460,160", 4, 3], ["E", "0,1110 340,1110 350,1220 0,1250", 6, 3],
  ["E", "1180,1100 1250,1040 1310,1330 1250,1340", 1, 7], ["E", "1050,1360 1200,1340 1240,1530 1110,1530", 3, 5], ["E", "680,210 930,270 920,340 670,330", 6, 3],
  ["E", "840,100 1020,60 1040,240 880,250", 4, 5], ["E", "10,590 180,460 260,640 80,730", 5, 3], ["E", "1180,150 1300,240 1150,360 1070,180", 4, 4],
  ["E", "1210,1370 1300,1350 1300,1530 1250,1530", 1, 6], ["E", "90,750 270,740 290,900 100,920", 3, 2], ["E", "0,860 160,870 280,960 60,1010", 4, 3],
  ["E", "1340,1350 1540,1400 1550,1530 1330,1540", 4, 3], ["E", "480,250 660,260 660,320 500,340", 3, 2], ["E", "780,760 920,760 920,800 800,810", 3, 1],
  ["E", "380,1230 480,1220 560,1400 380,1460", 2, 3], ["E", "300,650 520,560 600,720 590,820", 3, 1],
  ["F", "240,420 585,340 600,590 230,600", 12, 5], ["F", "600,330 780,300 790,540 610,590", 6, 6], ["F", "190,640 400,660 420,920 220,920", 7, 7],
  ["F", "50,980 420,950 420,1180 60,1190", 12, 4], ["F", "70,1190 430,1150 430,1460 210,1480", 6, 4], ["F", "0,0 195,0 210,290 20,370", 7, 6],
  ["F", "205,0 575,0 580,140 215,280", 10, 5], ["F", "440,680 690,750 520,830 450,940", 5, 4], ["F", "470,960 640,780 800,870 700,1150", 4, 4],
  ["F", "450,1030 620,1020 640,1270 450,1290", 4, 5], ["F", "830,560 1200,600 1340,800 980,790", 8, 5], ["F", "820,740 1050,820 1020,890 830,890", 3, 3],
  ["F", "1240,1010 1340,1030 1290,1160 1230,1120", 2, 4], ["F", "880,1150 1100,1150 1110,1420 900,1360", 4, 4], ["F", "1130,1150 1280,1190 1240,1430 1120,1410", 3, 6],
  ["F", "1190,860 1400,860 1400,990 1200,930", 5, 3], ["F", "450,1320 620,1330 620,1530 470,1480", 3, 3], ["F", "800,300 890,300 890,400 790,400", 2, 5],
  ["F", "1230,40 1340,20 1330,120 1230,125", 2, 2], ["F", "0,460 220,490 220,600 0,600", 6, 4], ["F", "1100,410 1190,300 1260,450 1180,520", 2, 2],
  ["F", "680,1400 800,1360 810,1500 690,1520", 1, 1], ["F", "430,660 560,760 480,820 440,780", 3, 3], ["F", "840,1360 1050,1400 1230,1540 860,1540", 4, 2],
  ["F", "610,60 760,20 770,70 600,130", 3, 2],
];

// Winding local lanes
const LANES: [Tile, string][] = [
  ["A", "10,25 60,180 110,245 235,410 240,600 205,715"], ["A", "110,245 260,110 390,20"], ["A", "420,300 335,365 332,440 240,450"],
  ["A", "415,300 520,230"], ["A", "190,560 190,490 240,478"], ["A", "205,598 270,605 390,590"], ["A", "330,630 345,625 362,640 365,690"],
  ["A", "650,270 780,450"], ["A", "660,1262 765,1250"], ["A", "500,1460 560,1475 610,1472 680,1440 765,1435"], ["A", "1285,1465 1295,1448 1568,1460"],
  ["A", "680,1372 765,1365"], ["A", "740,610 800,590 845,560"], ["A", "490,1460 590,1700"], ["A", "1100,1460 1205,1473"], ["A", "800,1265 1100,1410"],
  ["B", "545,1280 640,1100 690,1220 700,1280 620,1350 545,1300 545,1280"], ["B", "770,30 700,60 640,40 600,60"], ["B", "670,1060 740,955 810,1050 700,1130"],
  ["B", "1470,1230 1468,1370 1525,1420 1530,1480 1568,1568"], ["B", "415,1530 530,1520"], ["B", "690,670 800,620 900,590"], ["B", "740,780 760,700 750,690"],
  ["C", "660,1110 670,1130 670,1210"], ["C", "620,940 655,885 640,830"], ["C", "620,940 715,950 722,1060 760,1105"], ["C", "620,940 560,1012"],
  ["C", "1100,210 1070,225 1010,400"], ["C", "760,380 800,490 700,530"], ["C", "1140,710 1220,740 1310,735"], ["C", "1365,500 1370,640 1390,660"],
  ["C", "1537,690 1500,700 1465,740 1480,775 1537,778"], ["C", "1225,210 1230,180 1300,160"], ["C", "1260,130 1290,270 1300,310"], ["C", "1350,170 1410,280 1450,365"],
  ["C", "905,210 920,330 975,362 1005,320 1035,330"], ["C", "1170,540 1175,600 1215,640 1210,690 1145,680"], ["C", "430,900 455,960"],
  ["D", "510,10 600,200 612,320"], ["D", "405,120 435,88 460,90 500,135 570,165"], ["D", "130,440 210,445 270,475"], ["D", "60,450 60,500 120,508"],
  ["D", "1080,490 1095,360 1150,350 1215,350 1270,440 1280,500 1180,535 1090,510"], ["D", "500,1030 490,1050 540,1040 580,1100"], ["D", "440,920 380,1130 420,1030"],
  ["D", "780,1130 790,1200 860,1190 950,1188"], ["D", "400,1390 410,1540"], ["D", "1140,950 1150,1130 1185,1285"], ["D", "1260,1250 1310,1340"], ["D", "940,630 935,870 975,845 945,870"],
  ["D", "170,790 175,940 200,1100"], ["D", "720,890 740,1010 780,1130 765,1155"],
  ["E", "600,740 585,870"], ["E", "130,1480 180,1530 200,1500 150,1480 120,1500 130,1540"], ["E", "1365,950 1355,1055 1420,1060 1425,1000"], ["E", "1460,1000 1480,985 1520,1070"],
  ["E", "1310,770 1300,860 1290,1050"], ["E", "1500,830 1500,940"], ["E", "20,1290 110,1270 150,1330 60,1380 20,1330"], ["E", "300,740 290,750 300,800"],
  ["F", "850,480 780,520 775,380 830,360"], ["F", "1410,295 1490,340 1520,490 1440,550 1437,700"], ["F", "1350,350 1410,345 1430,310"], ["F", "1310,500 1370,460 1400,460"],
  ["F", "820,740 830,800 890,815 970,805 1000,850"], ["F", "830,890 1040,880"], ["F", "640,925 720,900 790,870"], ["F", "1040,880 1110,940 1145,900"],
  ["F", "240,1370 320,1300 345,1150 420,1110"], ["F", "690,1270 700,1100 760,1220"], ["F", "1245,1390 1410,1400"], ["F", "1430,770 1537,740"], ["F", "560,660 610,600 720,630 720,570"],
  ["F", "430,690 470,740 500,820"], ["F", "80,1070 110,1120 100,1160"], ["F", "360,310 460,280 540,290 640,270"],
];

const blockPath = ([t, s, nu, nv]: [Tile, string, number, number]) => {
  const [a, b, c, d] = s.split(" ").map((p) => p.split(",").map(Number));
  const mix = (p: number[], q: number[], k: number) => [p[0] + (q[0] - p[0]) * k, p[1] + (q[1] - p[1]) * k];
  const seg = (p: number[], q: number[]) => `M${pt(t, p[0], p[1]).join(",")}L${pt(t, q[0], q[1]).join(",")}`;
  let out = "";
  for (let i = 0; i <= nu; i++) {
    // Uneven block lengths keep the street pattern organic.
    const trim = ((i * 7) % 4) * 0.06;
    const top = mix(a, b, i / nu);
    const bottom = mix(d, c, i / nu);
    out += seg(mix(top, bottom, trim), mix(top, bottom, 1 - ((i * 5) % 3) * 0.08));
  }
  for (let j = 0; j <= nv; j++) {
    const left = mix(a, d, j / nv);
    const right = mix(b, c, j / nv);
    const from = Math.floor(((j * 3) % 4) * 0.25 * nu) / nu;
    const span = j % 3 === 1 ? 0.75 : 1;
    out += seg(mix(left, right, j % 2 ? 0 : from * 0.5), mix(left, right, span));
  }
  return out;
};

// text, x, baseline, width, size, colour
type Label = [string, number, number, number, number, string];

const LABELS: Label[] = [
  ["Lakeland", 1185, 438.5, 88, 23, "#acacac"],
  ["ood Garden", 904, 488, 111, 23, "#acacac"],
  ["North Belle Isle", 1032, 537, 151, 23, "#acacac"],
  ["oy", 901, 746, 18, 23, "#acacac"],
  ["Galeville", 1915.5, 442.7, 83, 23, "#acacac"],
  ["Mattydale", 2210, 328, 93, 23, "#acacac"],
  ["Hinsdale", 2295, 229.8, 84, 23, "#acacac"],
  ["Lyncourt", 2424, 570, 85, 23, "#acacac"],
  ["Collamer", 3128, 226, 85, 23, "#acacac"],
  ["Franklin Park", 2948, 554, 133, 23, "#acacac"],
  ["East Syracuse", 2896.5, 808.5, 158, 26, "#989898"],
  ["Solvay", 1549.6, 915, 72.5, 26, "#989898"],
  ["Fairmount", 1200.5, 1074, 101, 23, "#acacac"],
  ["Westvale", 1401.7, 1070, 86.5, 23, "#acacac"],
  ["ew Manor", 905, 1123, 94, 23, "#acacac"],
  ["Sherwood Knolls", 946, 1217, 166, 23, "#acacac"],
  ["Taunton", 1532, 1319.7, 77.6, 23, "#acacac"],
  ["Split Rock", 1365.8, 1414.5, 98, 23, "#acacac"],
  ["Syracuse", 2147, 1094, 171, 42, "#696969"],
  ["DeWitt", 2989.3, 1204, 92, 32, "#939393"],
];

const MARKERS: [number, number, string][] = [
  [1263.5, 495, "#2b7cd3"],
  [1706.8, 361, "#2b7cd3"],
  [1726.7, 373, "#2b7cd3"],
  [2258.4, 314, "#2b7cd3"],
  [1962, 744, "#2b7cd3"],
  [2492.3, 548.4, "#2b7cd3"],
  [2533.7, 688.5, "#2b7cd3"],
  [2356.8, 886.6, "#2b7cd3"],
  [2143, 1050, "#2b7cd3"],
  [2192.5, 1056.6, "#2b7cd3"],
  [2184.4, 1084.3, "#2b7cd3"],
  [1757.9, 1247.8, "#c61f1c"],
];

function RestaurantMap() {
  return (
    <svg className="block h-[1240px] w-[2280px] overflow-hidden" viewBox="904 218 2280 1240">
      <defs>
        <filter id="hill" x="-30%" y="-30%" width="160%" height="160%">
          <feGaussianBlur stdDeviation="13" />
        </filter>
      </defs>
      <rect x="904" y="218" width="2280" height="1240" fill="#f6f6f4" />
      <g filter="url(#hill)">
        {SHADE_AREAS.map(([t, s], i) => (
          <polygon key={i} points={line(t, s)} fill="#f0f0ef" />
        ))}
        {SHADES.map(([t, x, y, rx, ry], i) => {
          const [cx, cy] = pt(t, x, y);
          return <ellipse key={i} cx={cx} cy={cy} rx={rx * TILES[t][2]} ry={ry * TILES[t][3]} fill="#ededec" opacity="0.85" />;
        })}
      </g>
      {PARKS.map(([t, s], i) => (
        <polygon key={i} points={line(t, s)} fill="#edefee" />
      ))}
      {FLANKS.map(([t, s], i) => (
        <polygon key={i} points={line(t, s)} fill="#e8e8e7" opacity="0.7" />
      ))}
      <g fill="none" stroke="#eaeeec" strokeWidth="2" strokeLinejoin="round">
        {BLOCKS.map((b, i) => (
          <path key={i} d={blockPath(b)} />
        ))}
        {LANES.map(([t, s], i) => (
          <polyline key={i} points={line(t, s)} />
        ))}
      </g>
      <g fill="#cad2d3">
        <polygon points={LAKE} />
        {WATER.map(([t, s], i) => (
          <polygon key={i} points={line(t, s)} />
        ))}
      </g>
      <g fill="none" stroke="#c8d1d2" strokeLinejoin="round">
        {STREAMS.map(([t, w, s], i) => (
          <polyline key={i} points={line(t, s)} strokeWidth={w} />
        ))}
      </g>
      <g fill="none" strokeLinejoin="round" strokeLinecap="round">
        <g stroke="#e8eeeb">
          {RAMPS.map(([t, s], i) => (
            <polyline key={i} points={line(t, s)} strokeWidth={4.5} />
          ))}
          {ROADS.map(([t, w, s], i) => (
            <polyline key={i} points={line(t, s)} strokeWidth={w * 0.78 + 3} />
          ))}
        </g>
        <g stroke="#ffffff">
          {RAMPS.map(([t, s], i) => (
            <polyline key={i} points={line(t, s)} strokeWidth={2} />
          ))}
          {ROADS.map(([t, w, s], i) => (
            <polyline key={i} points={line(t, s)} strokeWidth={w * 0.78} />
          ))}
        </g>
      </g>
      <text x="1520" y="460" textLength="165" lengthAdjust="spacingAndGlyphs" fontSize="25" fill="#8b9596" className="font-['Roboto',sans-serif] italic">
        Onondaga Lake
      </text>
      {LABELS.map(([text, x, y, w, size, color]) => (
        <text
          key={text}
          x={x}
          y={y}
          textLength={w}
          lengthAdjust="spacingAndGlyphs"
          fontSize={size}
          fill={color}
          stroke="#f9f9f8"
          strokeWidth="4"
          strokeLinejoin="round"
          paintOrder="stroke"
          className="font-['Roboto',sans-serif]"
        >
          {text}
        </text>
      ))}
      {MARKERS.map(([x, y, c], i) => (
        <circle key={i} cx={x} cy={y} r="16.5" fill={c} opacity="0.75" />
      ))}
    </svg>
  );
}

/* ------------------------------------------------------------------ */
/* Chart toolbar                                                       */
/* ------------------------------------------------------------------ */

const IDLE = "#c7c7c7";
const ACTIVE = "#7b7b7b";

function Toolbar() {
  const cells = [0, 9.33, 18.66, 28];
  return (
    <div className="mr-6 mt-7 flex h-8 justify-end gap-8">
      <div className="flex gap-4">
        <svg className="size-8" viewBox="0 0 1000 1000" fill={IDLE}>
          <path
            transform="matrix(1 0 0 -1 0 850)"
            d="m500 450c-83 0-150-67-150-150 0-83 67-150 150-150 83 0 150 67 150 150 0 83-67 150-150 150z m400 150h-120c-16 0-34 13-39 29l-31 93c-6 15-23 28-40 28h-340c-16 0-34-13-39-28l-31-94c-6-15-23-28-40-28h-120c-55 0-100-45-100-100v-450c0-55 45-100 100-100h800c55 0 100 45 100 100v450c0 55-45 100-100 100z m-400-550c-138 0-250 112-250 250 0 138 112 250 250 250 138 0 250-112 250-250 0-138-112-250-250-250z m365 380c-19 0-35 16-35 35 0 19 16 35 35 35 19 0 35-16 35-35 0-19-16-35-35-35z"
          />
        </svg>
        <svg className="size-8" viewBox="0 0 32 32" fill="none" stroke={IDLE} strokeWidth="2" strokeLinejoin="round">
          <path d="M4 3H21L29 10.500V28Q29 29 28 29H4Q3 29 3 28V4Q3 3 4 3Z" />
          <path d="M8.500 3V12Q8.500 12.800 9.500 12.800H18.500Q19.500 12.800 19.500 12V3M8.500 29V20.500Q8.500 19.500 9.500 19.500H23.500Q24.500 19.500 24.500 20.500V29" />
          <path d="M9 3.500H14V12.500H9Z" fill={IDLE} stroke="none" />
        </svg>
      </div>
      <div className="flex gap-4">
        <svg className="size-8" viewBox="0 0 1000 1000" fill={ACTIVE}>
          <path
            transform="matrix(1 0 0 -1 0 850)"
            d="m1000 350l-187 188 0-125-250 0 0 250 125 0-188 187-187-187 125 0 0-250-250 0 0 125-188-188 186-187 0 125 252 0 0-250-125 0 187-188 188 188-125 0 0 250 250 0 0-126 187 188z"
          />
        </svg>
        <svg className="size-8" viewBox="0 0 32 32" fill={IDLE}>
          {cells.map((y) =>
            cells.map((x) =>
              x === 0 || y === 0 || x === 28 || y === 28 ? <rect key={`${x}-${y}`} x={x} y={y} width="4.300" height="4.300" /> : null,
            ),
          )}
        </svg>
        <svg className="size-8" viewBox="0 0 32 32" fill="none" stroke={IDLE} strokeWidth="2.700">
          <path d="M4 20C-1 13 1 4 11 2.500C21 1 30 4 30.500 11.500C31 19 22 25 12 23.500" />
          <circle cx="8.500" cy="20.500" r="4.500" strokeWidth="2" />
          <path d="M8.500 18C13 21 13 25 6.500 30.500" strokeWidth="1.800" />
        </svg>
      </div>
      <svg className="size-8" viewBox="0 0 32 32" fill={IDLE}>
        <path d="M16 4.500L19.800 8.300L23.500 12V5H27V14.500L30.200 18L28.800 19.600L16 7.300L3.200 19.600L1.800 18Z" />
        <path d="M16 9.200L26 18.800V28.500H18.700V20H13.300V28.500H6V18.800Z" />
      </svg>
      <svg className="size-8" viewBox="0 0 32 32" fill={ACTIVE}>
        <path d="M0 16L8 8H32V24H8Z" />
      </svg>
      <svg className="size-8" viewBox="0 0 132 132">
        <rect width="132" height="132" rx="6" fill="#459bfb" />
        <g fill="#6df0e8">
          <circle cx="30" cy="30" r="6" />
          <circle cx="54" cy="30" r="6" />
          <circle cx="78" cy="30" r="6" />
          <circle cx="102" cy="30" r="6" />
          <circle cx="30" cy="54" r="6" />
          <circle cx="78" cy="54" r="6" />
        </g>
        <g fill="#ffffff">
          <rect x="24" y="72" width="12" height="36" rx="6" />
          <rect x="48" y="48" width="12" height="60" rx="6" />
          <rect x="72" y="72" width="12" height="36" rx="6" />
          <rect x="96" y="48" width="12" height="60" rx="6" />
        </g>
      </svg>
    </div>
  );
}

/* ------------------------------------------------------------------ */
/* Left hand controls                                                  */
/* ------------------------------------------------------------------ */

function Dropdown({ value, placeholder }: { value?: string; placeholder?: string }) {
  return (
    <div className="flex h-[72px] w-[700px] items-center rounded-lg border-2 border-[#ccc] bg-white pl-[19px] pr-5 text-[30px]">
      <span className={value ? "flex-1 text-[#333]" : "flex-1 tracking-[0.1px] text-[#aaa]"}>{value ?? placeholder}</span>
      {value ? (
        <svg className="mr-[18px] size-[18px]" viewBox="0 0 18 18" stroke="#999" strokeWidth="3" strokeLinecap="round">
          <path d="M2 2L16 16M16 2L2 16" />
        </svg>
      ) : null}
      <svg className="h-[10px] w-5" viewBox="0 0 20 10" fill="#999">
        <path d="M0 0H20L10 10Z" />
      </svg>
    </div>
  );
}

const PRICES = ["$", "$$", "$$$", "$$$$", "$$$$$"];

function PriceSlider() {
  return (
    <div className="ml-4 mt-[120px] w-[694px]">
      <div className="relative flex h-7 items-center justify-between">
        <div className="absolute left-[14px] right-[14px] top-[10px] h-2 bg-[#b7e0f8]" />
        {PRICES.map((p, i) => (
          <div key={p} className="relative flex size-7 items-center justify-center">
            <div
              className={
                i === PRICES.length - 1
                  ? "size-7 rounded-full border-4 border-[#a3daf9] bg-white"
                  : "size-4 rounded-full border-4 border-[#a3daf9] bg-white"
              }
            />
          </div>
        ))}
      </div>
      <div className="mt-[7px] flex justify-between text-2xl/9 tracking-[-0.2px] text-[#666]">
        {PRICES.map((p) => (
          <div key={p} className="flex w-7 justify-center whitespace-nowrap">
            <span>{p}</span>
          </div>
        ))}
      </div>
    </div>
  );
}

const SLICES: [number, string, string, number, number, number, string][] = [
  [26.1, "#3a77af", "26.1%", 269, 1267, 79, "#fff"],
  [13.4, "#8d6ab8", "13.4%", 304, 1391, 79, "#fff"],
  [15, "#c53932", "15%", 219, 1450, 54, "#fff"],
  [22.2, "#519e3e", "22.2%", 110, 1392, 79, "#fff"],
  [23.3, "#ef8636", "23.3%", 128, 1257.5, 79, "#444"],
];

const LEGEND: [string, string, number][] = [
  ["Gluten Free Food", "#3a77af", 206],
  ["Indian", "#ef8636", 76],
  ["Japanese", "#519e3e", 111],
  ["Mexican", "#c53932", 98],
  ["Chinese", "#8d6ab8", 95],
];

function DishesChart() {
  const cx = 197;
  const cy = 1324;
  const r = 171;
  let turned = 0;
  return (
    <svg className="mt-[39px] block h-[560px] w-[728px] font-['DejaVu_Sans',sans-serif]" viewBox="16 1040 728 560">
      <text x="48.5" y="1094" fontSize="33.500" fill="#444" textLength="594" lengthAdjust="spacingAndGlyphs">
        Top 5 Favoured Dishes in Syracuse
      </text>
      {SLICES.map(([share, color, text, x, y, w, ink]) => {
        const a0 = (turned / 100) * Math.PI * 2;
        turned += share;
        const a1 = (turned / 100) * Math.PI * 2;
        const d = `M${cx},${cy}L${cx + r * Math.sin(a0)},${cy - r * Math.cos(a0)}A${r},${r} 0 0 1 ${cx + r * Math.sin(a1)},${cy - r * Math.cos(a1)}Z`;
        return (
          <g key={text}>
            <path d={d} fill={color} />
            <text x={x - w / 2 - 0.5} y={y} fontSize="24.500" fill={ink} textLength={w + 1} lengthAdjust="spacingAndGlyphs">
              {text}
            </text>
          </g>
        );
      })}
      {LEGEND.map(([name, color, w], i) => (
        <g key={name}>
          <rect x="403" y={1141 + i * 38} width="24" height="24" fill={color} />
          <text x="454.500" y={1163 + i * 38} fontSize="24.500" fill="#444" textLength={w} lengthAdjust="spacingAndGlyphs">
            {name}
          </text>
        </g>
      ))}
    </svg>
  );
}

/* ------------------------------------------------------------------ */
/* Results table                                                       */
/* ------------------------------------------------------------------ */

const HEADERS = ["Name", "Contact", "Restaurant URL", "Price", "Rating"];
const ROWS = [
  ["Mingold Chinese Food", "(315) 214-5048", "https://www.yelp.com/biz/mingold-chinese-fo", "$", "5"],
  ["China King", "(315) 720-1071", "https://www.yelp.com/biz/china-king-baldwin", "$$", "5"],
  ["Fabio's Antica Cucina", "", "https://www.yelp.com/biz/fabios-antica-cucin", "$$", "4.2"],
  ["Royal India Grill", "(315) 825-3555", "https://www.yelp.com/biz/royal-india-grill-har", "$$", "4.06"],
];

const CELL_TRACKING = ["tracking-[0.1px]", "tracking-[-0.15px]", "tracking-[0.480px]", "tracking-normal", "tracking-normal"];

function Checkbox({ checked }: { checked?: boolean }) {
  return (
    <div className="flex size-10 items-center justify-center border-4 border-[#ddd] bg-white">
      {checked ? <div className="size-4 bg-[#1f5493]" /> : null}
    </div>
  );
}

function ResultsTable() {
  return (
    <div className="relative ml-[14px] h-[346px] w-[3330px] overflow-hidden border-x-2 border-[#e4e4e4] text-[30px] text-[#333]">
      <div className="h-0.5 w-[730px] bg-[#ebebeb]" />
      <div className="flex h-[72px] w-[3322px] border-b-2 border-t-2 border-[#ddd] bg-[#f9f9f9] font-bold">
        <div className="flex w-[122px] justify-center border-x-2 border-[#ddd] pt-[22px]">
          <Checkbox />
        </div>
        {HEADERS.map((h) => (
          <div key={h} className="flex w-[640px] items-center border-r-2 border-[#ddd] px-4 pt-[15px]">
            {h}
          </div>
        ))}
      </div>
      {ROWS.map((row, i) => (
        <div key={row[0]} className={i === 0 ? "flex h-[70px] bg-[#deebf8]" : "flex h-[70px] bg-white"}>
          <div className="flex w-[122px] justify-center border-x-2 border-b-2 border-[#ddd] pt-[17px]">
            <Checkbox checked={i === 0} />
          </div>
          {row.map((cell, j) => (
            <div key={j} className="flex w-[640px] items-center border-b-2 border-r-2 border-b-[#ddd] border-r-[#ececec] px-4">
              <span className={`w-full overflow-hidden whitespace-nowrap ${CELL_TRACKING[j]}`}>{cell}</span>
            </div>
          ))}
        </div>
      ))}
      <div className="absolute left-11 top-[184px] flex h-[102px] w-[68px] flex-col items-center bg-white/90">
        <svg className="ml-1 mt-[18px] size-7" viewBox="0 0 28 28" fill="none" stroke="#d2e3f6" strokeWidth="2.600">
          <path d="M4 6.500A12 12 0 1 1 5.500 23.500" />
          <path d="M1 0V10H10Z" fill="#d2e3f6" stroke="none" />
        </svg>
        <span className="mt-[25px] text-[30px]/[34px] text-[#d2e3f6]">undo</span>
      </div>
    </div>
  );
}

export default function App() {
  return (
    <div className="flex h-[1962px] w-[3356px] flex-col overflow-hidden border-t-2 border-[#111] bg-white font-['Liberation_Sans',Arial,sans-serif]">
      <div className="flex h-[1614px]">
        <aside className="w-[760px] shrink-0 pl-4 text-[#333]">
          <h1 className="mt-[17px] text-[92px]/[108px] tracking-[-4.200px]">YELP ME!</h1>
          <h5 className="mt-[50px] whitespace-nowrap text-[44px]/[66px] tracking-[-0.780px]">Yelps you to find the best restaurant...</h5>
          <div className="mt-[63px] flex flex-col gap-[72px]">
            <Dropdown value="New York" />
            <Dropdown value="Syracuse" />
            <Dropdown value="Lunch" />
            <Dropdown placeholder="What would you like to eat?" />
          </div>
          <PriceSlider />
          <DishesChart />
        </aside>
        <main className="flex-1">
          <Toolbar />
          <div className="ml-36 w-[2280px]">
            <h2 className="mt-[23px] text-center font-['DejaVu_Sans',sans-serif] text-[34px]/[40px] font-bold tracking-[-0.420px] text-[#444]">Restaurant Map</h2>
            <div className="mt-[93px]">
              <RestaurantMap />
            </div>
          </div>
        </main>
      </div>
      <ResultsTable />
    </div>
  );
}
